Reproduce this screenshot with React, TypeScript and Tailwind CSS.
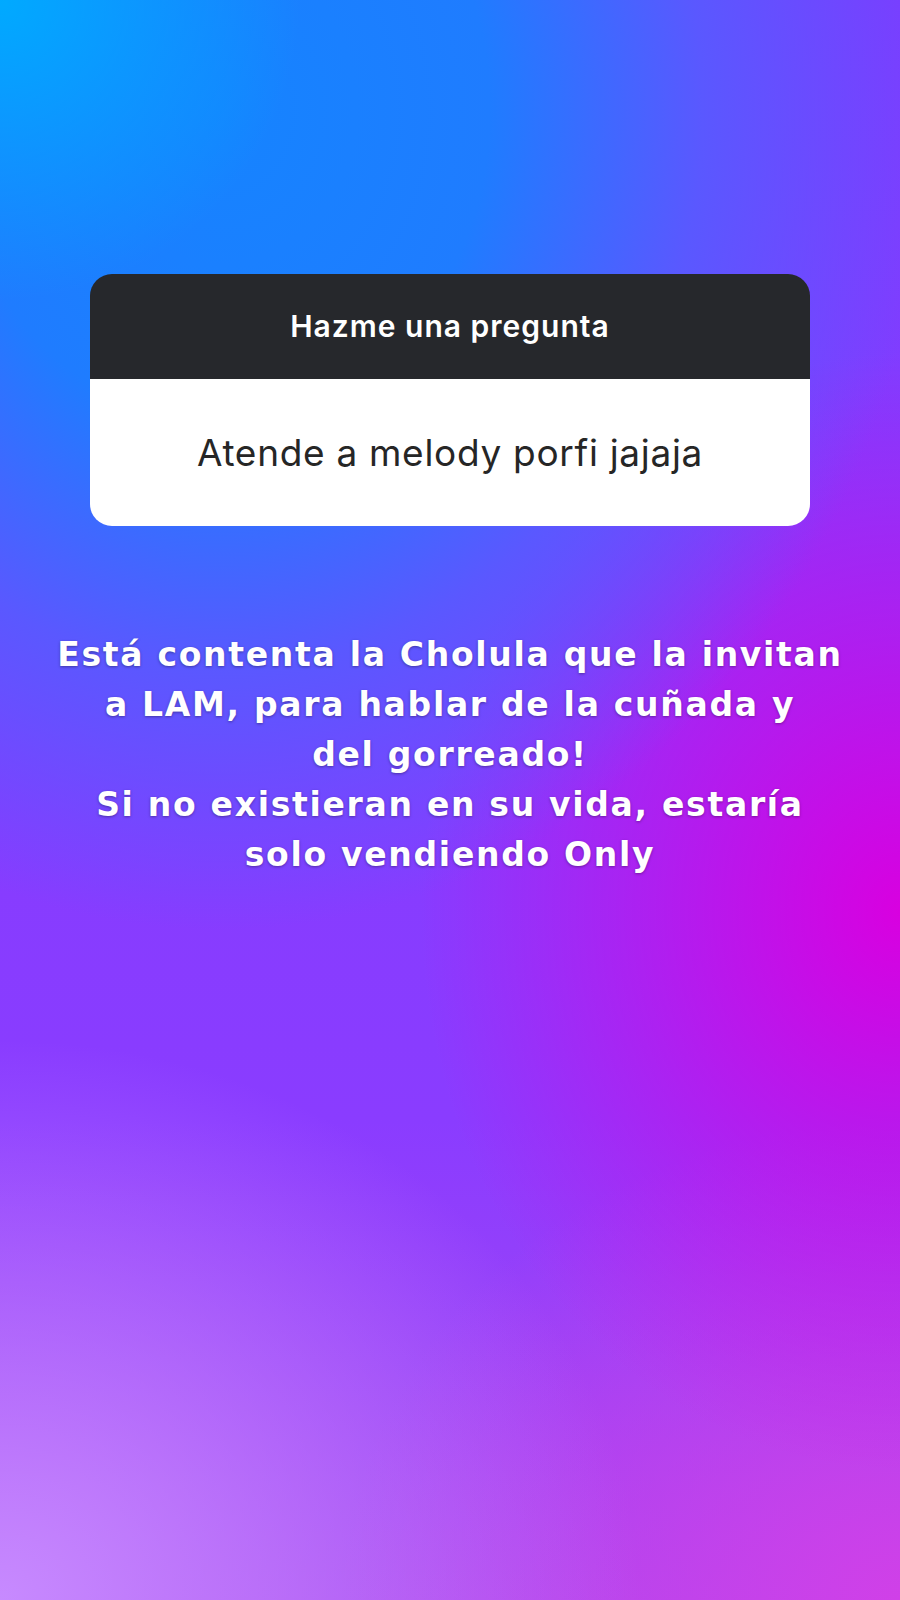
import React from "react";

export default function App() {
  const lines = [
    "Está contenta la Cholula que la invitan",
    "a LAM, para hablar de la cuñada y",
    "del gorreado!",
    "Si no existieran en su vida, estaría",
    "solo vendiendo Only",
  ];
  return (
    <div className="w-[900px] h-[1600px] overflow-hidden flex flex-col items-center bg-[radial-gradient(circle_300px_at_0px_0px,#00aaff_0%,rgba(0,170,255,0)_100%),radial-gradient(710px_820px_at_220px_110px,#1584ff_0%,#1f7cff_38%,#5a58ff_68%,rgba(123,61,255,0)_100%),radial-gradient(480px_560px_at_100%_57%,#d800e0_0%,rgba(216,0,224,0)_100%),radial-gradient(640px_560px_at_0%_100%,#c78aff_0%,rgba(199,138,255,0)_100%),radial-gradient(560px_480px_at_100%_100%,#d040e8_0%,rgba(208,64,232,0)_100%),linear-gradient(180deg,#7b3dff_0%,#8a3cff_70%,#a848f0_100%)]">
      <div className="mt-[274px] w-[720px] rounded-[22px] overflow-hidden flex flex-col">
        <div className="h-[105px] bg-[#26282c] flex items-center justify-center">
          <span className="text-white text-[30px] font-semibold tracking-[1px] font-['Inter',sans-serif]">
            Hazme una pregunta
          </span>
        </div>
        <div className="h-[147px] bg-white flex items-center justify-center">
          <span className="text-[#262626] text-[37px] font-normal tracking-[0.7px] font-['Inter',sans-serif]">
            Atende a melody porfi jajaja
          </span>
        </div>
      </div>
      <div className="mt-[104px] flex flex-col items-center text-white text-[33px] leading-[50px] font-bold tracking-[1.7px] font-['DejaVu_Sans',sans-serif] [text-shadow:0_1px_3px_rgba(0,0,0,0.35)]">
        {lines.map((l) => (
          <div key={l} className="whitespace-nowrap">
            {l}
          </div>
        ))}
      </div>
    </div>
  );
}
